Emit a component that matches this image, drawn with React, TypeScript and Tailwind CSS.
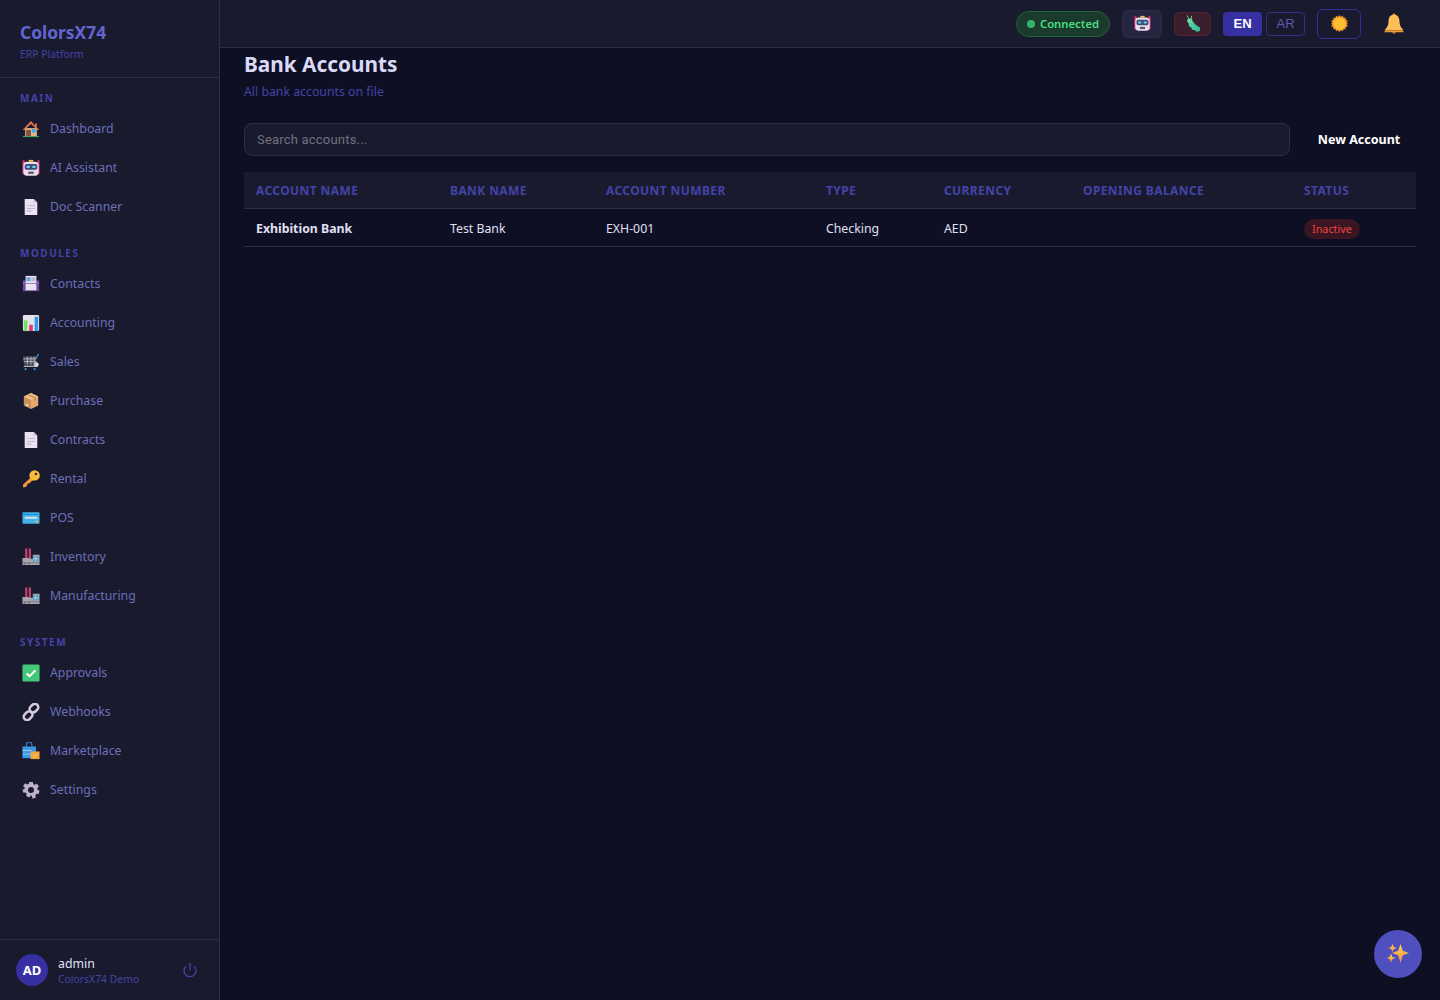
import type { ReactNode } from 'react';
import { Power } from 'lucide-react';

// small emoji-like drawings, all on a 20x20 box
const Ico = ({ children, size = 18 }: { children: ReactNode; size?: number }) => (
  <svg width={size} height={size} viewBox="0 0 20 20" className="shrink-0">
    {children}
  </svg>
);

const House = () => (
  <Ico>
    <path d="M3.500 9h13v9h-13z" fill="#e3b78c" />
    <path d="M10 1 1 10.500 2.500 11.500 10 4.500l7.500 7 1.500-1-2.500-2.500V4h-2v2z" fill="#e8704a" />
    <path d="M4.500 11h5.500v7H4.500z" fill="#7a5548" />
    <path d="M11 10h4v4h-4z" fill="#39a9e8" />
    <path d="M1 18h18v1H1z" fill="#3fbf6a" />
  </Ico>
);
const Robot = ({ size = 18 }: { size?: number }) => (
  <Ico size={size}>
    <path d="M7.500 1h5v2h-5z" fill="#f5c542" />
    <path d="M0.500 1.500h2.500V17H0.500zM17 1.500h2.500V17H17z" fill="#d9366e" />
    <rect x="1.500" y="3" width="17" height="15.500" rx="4" fill="#eadcec" />
    <rect x="3" y="5.500" width="14" height="6.500" rx="2" fill="#3e4a78" />
    <path d="M5 7.500h3.500v2.500H5zM11.500 7.500H15v2.500h-3.500z" fill="#6fd0f0" />
    <path d="M7 14h6v2.500H7z" fill="#58506e" />
  </Ico>
);
const Doc = () => (
  <Ico>
    <path d="M3 1h10l4 4v14H3z" fill="#e8e2f2" />
    <path d="M13 1l4 4h-4z" fill="#c4bcd4" />
    <path d="M5.500 8h9v1h-9zM5.500 11h9v1h-9zM5.500 14h5v1h-5z" fill="#b4aec2" />
  </Ico>
);
const CardIndex = () => (
  <Ico>
    <path d="M1 6h18v12H1z" fill="#6b4aa0" />
    <path d="M4 1h12v16H4z" fill="#e8e2f2" />
    <path d="M5 2.500h4.500V7H5z" fill="#6aa8e0" />
    <path d="M10.500 2.500H15V7h-4.500z" fill="#c0b8d0" />
    <path d="M1 8h3v2H1zM16 8h3v2h-3z" fill="#8b68c0" />
    <path d="M4 9h12v1H4z" fill="#8a7a9c" />
  </Ico>
);
const Chart = () => (
  <Ico>
    <rect x="1" y="1" width="18" height="18" rx="1.500" fill="#e6e2ec" />
    <path d="M2 7h4v12H2z" fill="#6ee06a" />
    <path d="M8 12h4v7H8z" fill="#e8346e" />
    <path d="M14 3h4v16h-4z" fill="#2f9be8" />
  </Ico>
);
const Cart = () => (
  <Ico>
    <path d="M1 4h15v9H2.500z" fill="#50505c" />
    <path d="M1.500 6.500h14.500M2 9.500h14M6 4v9M10 4v9M13.500 4v9" stroke="#b8b8c4" strokeWidth="1" />
    <path d="M2 14h14v1.500H2z" fill="#b8b8c4" />
    <path d="m15.500 6 3-5" stroke="#3f90d8" strokeWidth="1.300" fill="none" />
    <circle cx="16" cy="13" r="2.600" fill="#d8d8de" />
    <circle cx="4" cy="18" r="1.200" fill="#3f90d8" />
    <circle cx="14" cy="18" r="1.200" fill="#3f90d8" />
  </Ico>
);
const BoxIco = () => (
  <Ico>
    <path d="M10 1 2 5v10l8 4z" fill="#c98f56" />
    <path d="m10 1 8 4v10l-8 4z" fill="#e2aa72" />
    <path d="m10 9 8-4-8-4-8 4z" fill="#edc08e" />
    <path d="m5.500 3 8 4.200v3l2-1V6.100l-8-4z" fill="#b57f4c" opacity=".7" />
    <path d="M4 13h3v3H4z" fill="#eadccb" opacity=".7" />
  </Ico>
);
const Key = () => (
  <Ico>
    <path d="m10 8-9 8.500L1.500 19.500 4 19l2-2v-2h2l2-2 3-2z" fill="#f59a3c" />
    <circle cx="14" cy="6" r="5.800" fill="#f7bd3a" />
    <circle cx="15.500" cy="4.500" r="1.400" fill="#2a2238" />
  </Ico>
);
const CreditCard = () => (
  <Ico>
    <rect x="0.500" y="3.500" width="19" height="13" rx="1" fill="#3fb4ea" />
    <path d="M0.500 5.500h19v1H0.500z" fill="#1c84c8" />
    <path d="M3 8.500h14V11H3z" fill="#c8dce8" />
    <path d="M15 13h2.500v2H15z" fill="#f5c542" />
  </Ico>
);
const Factory = () => (
  <Ico>
    <path d="M3.500 0.500H6v12H3.500zM7.500 0.500H10v12H7.500z" fill="#c2406e" />
    <path d="M0.500 11h5.500l2 0V12h4V7.500h7.500V19H0.500z" fill="#a8a4ac" />
    <path d="M12.500 9h5.500v6h-5.500z" fill="#4a9ec8" />
    <path d="M14.700 9h1v6h-1zM12.500 11.500H18v1h-5.500z" fill="#a8d4ea" />
    <path d="M0.500 16h19v1H0.500z" fill="#77737c" />
    <path d="M2 17h2v1H2zM7 17h2v1H7z" fill="#5a5660" />
  </Ico>
);
const Check = () => (
  <Ico>
    <rect x="0.500" y="0.500" width="19" height="19" rx="1.500" fill="#42c878" />
    <path d="m5 10.500 3.500 3L15 7" stroke="#fff" strokeWidth="2.200" fill="none" />
  </Ico>
);
const Link = () => (
  <Ico>
    <g fill="none" stroke="#d4ccdc" strokeWidth="2.800">
      <rect x="8" y="2" width="10.500" height="7.500" rx="3.700" transform="rotate(-45 13.200 5.700)" />
      <rect x="1.500" y="10.500" width="10.500" height="7.500" rx="3.700" transform="rotate(-45 6.700 14.200)" />
    </g>
  </Ico>
);
const Bag = () => (
  <Ico>
    <path d="M5 5V3a3 3 0 0 1 6 0v2" fill="none" stroke="#3178c6" strokeWidth="1.400" />
    <path d="M0.500 5h15v13H0.500z" fill="#3b9ae8" />
    <path d="M0.500 9h10v1h-10zM0.500 13h10v1h-10z" fill="#9ccaf0" />
    <path d="M9.500 10.500H19.500V19H9.500z" fill="#f5a83c" />
    <path d="m13 16 3-2" stroke="#fbe0a8" strokeWidth="1" />
  </Ico>
);
const Gear = () => (
  <Ico>
    <path
      fillRule="evenodd"
      d="M8 1h4l.5 2.500 1.700.8 2.300-1.300 2.300 3-1.800 1.800.3 1.900 2.200 1.200-1 3.600-2.500-.2-1.200 1.500.6 2.500-3.500 1.400L10.500 16h-1l-1.400 2.200-3.500-1.400.6-2.500-1.200-1.500-2.500.2-1-3.600L2.700 9.200 3 7.300 1.200 5.500l2.300-3 2.300 1.300 1.700-.8zM10 6.700a3.300 3.300 0 1 0 0 6.600 3.300 3.300 0 0 0 0-6.600z"
      fill="#bdb2cc"
    />
  </Ico>
);
const Bug = () => (
  <Ico>
    <circle cx="15" cy="15.500" r="3" fill="#3fb89a" />
    <circle cx="11.500" cy="13.500" r="3.300" fill="#45c4a2" />
    <circle cx="8.500" cy="10.500" r="3.200" fill="#4ccca6" />
    <circle cx="6.500" cy="6.500" r="3" fill="#62d8a0" />
    <path d="M5 4 3.500 0.500M8 4l.5-3" stroke="#7ae080" strokeWidth="1" />
  </Ico>
);
const Sun = () => (
  <Ico size={17}>
    <path
      d="m10 0 1.700 2 2.300-1.200.8 2.500 2.600-.1-.1 2.600 2.500.8L18.600 9l1.400 1-1.400 1 1.200 2.400-2.500.8.100 2.600-2.600-.1-.8 2.500-2.300-1.200L10 20l-1.700-2-2.300 1.200-.8-2.500-2.600.1.100-2.600-2.500-.8L1.400 11 0 10l1.400-1L.2 6.600l2.500-.8L2.600 3.200l2.600.1.8-2.500 2.300 1.200z"
      fill="#f08a24"
    />
    <circle cx="10" cy="10" r="7.500" fill="#fbbf30" />
  </Ico>
);
const Bell = () => (
  <Ico size={22}>
    <circle cx="10" cy="2" r="1.500" fill="#f0a030" />
    <path d="M10 1.500c-4 0-5 3-5 6.500 0 4-2.500 6-3.500 8h17c-1-2-3.500-4-3.500-8 0-3.500-1-6.500-5-6.500z" fill="#fbbf55" />
    <path d="M1.500 16h17v1.500h-17z" fill="#f09a30" />
    <path d="M8 17.500h4l-2 1.500z" fill="#e88a28" />
  </Ico>
);
const Sparkles = () => (
  <svg width="22" height="22" viewBox="0 0 22 22">
    <defs>
      <linearGradient id="spark" x1="0" y1="0" x2="0" y2="1">
        <stop offset="0" stopColor="#fdd05a" />
        <stop offset="1" stopColor="#f8943c" />
      </linearGradient>
    </defs>
    <path d="M13.500 1 15.800 7.800 22 10l-6.200 2.200L13.500 20l-2.300-7.800L5 10l6.200-2.200z" fill="url(#spark)" />
    <path d="m5.500 1 1.200 2.800L9.500 5 6.700 6.200 5.500 9 4.300 6.200 1.500 5l2.800-1.200z" fill="url(#spark)" />
    <path d="m4 10.500 1.200 3.300 3.300 1.200-3.300 1.200L4 19.500l-1.200-3.300L0 15l2.800-1.200z" fill="url(#spark)" />
  </svg>
);

const nav: { title: string; items: [ReactNode, string][] }[] = [
  {
    title: 'MAIN',
    items: [
      [<House />, 'Dashboard'],
      [<Robot />, 'AI Assistant'],
      [<Doc />, 'Doc Scanner'],
    ],
  },
  {
    title: 'MODULES',
    items: [
      [<CardIndex />, 'Contacts'],
      [<Chart />, 'Accounting'],
      [<Cart />, 'Sales'],
      [<BoxIco />, 'Purchase'],
      [<Doc />, 'Contracts'],
      [<Key />, 'Rental'],
      [<CreditCard />, 'POS'],
      [<Factory />, 'Inventory'],
      [<Factory />, 'Manufacturing'],
    ],
  },
  {
    title: 'SYSTEM',
    items: [
      [<Check />, 'Approvals'],
      [<Link />, 'Webhooks'],
      [<Bag />, 'Marketplace'],
      [<Gear />, 'Settings'],
    ],
  },
];

const columns = [
  ['ACCOUNT NAME', 'w-[194px]'],
  ['BANK NAME', 'w-[156px]'],
  ['ACCOUNT NUMBER', 'w-[220px]'],
  ['TYPE', 'w-[118px]'],
  ['CURRENCY', 'w-[139px]'],
  ['OPENING BALANCE', 'w-[221px]'],
  ['STATUS', 'w-[124px]'],
];

export default function App() {
  return (
    <div className="flex h-screen overflow-hidden bg-[#0f0f23] font-['Noto_Sans',sans-serif]">
      <aside className="flex w-[220px] shrink-0 flex-col border-r border-[#2d2d4a] bg-[#1a1a2e]">
        <div className="h-[78px] border-b border-[#2d2d4a] px-5 pt-[20px]">
          <div className="text-[17.400px] leading-[25px] font-bold text-[#6366d1]">ColorsX74</div>
          <div className="mt-[2px] text-[10.400px] leading-[15px] text-[#4343a8]">ERP Platform</div>
        </div>
        <nav className="flex-1 pt-[13px]">
          {nav.map((section) => (
            <div key={section.title} className="mb-[20px]">
              <div className="px-5 pb-[4px] text-[10px] leading-[14px] font-bold tracking-[1.500px] text-[#4343a8]">
                {section.title}
              </div>
              {section.items.map(([icon, label]) => (
                <div key={label} className="flex h-[39px] items-center gap-[10px] pl-[22px] text-[12.300px] text-[#6a6fb8]">
                  {icon}
                  <span className="pt-[2px]">{label}</span>
                </div>
              ))}
            </div>
          ))}
        </nav>
        <div className="flex h-[61px] items-center gap-[10px] border-t border-[#2d2d4a] px-4">
          <div className="flex size-8 items-center justify-center rounded-full bg-[#3730a3] pt-[2px] text-[13px] font-bold text-white">
            AD
          </div>
          <div className="flex-1 pt-[2px]">
            <div className="text-[12.300px] leading-[16px] text-[#e0e0f5]">admin</div>
            <div className="text-[10.400px] leading-[15px] text-[#4343a8]">ColorsX74 Demo</div>
          </div>
          <Power size={16} className="mr-[5px] text-[#4343a8]" />
        </div>
      </aside>

      <div className="flex min-w-0 flex-1 flex-col">
        <header className="flex h-[48px] items-center justify-end border-b border-[#2d2d4a] bg-[#1a1a2e] pr-[35px]">
          <div className="flex h-[26px] w-[94px] items-center justify-center gap-[5px] rounded-full border border-[#22633f] bg-[#1a3a2e] text-[11.300px] font-semibold text-[#4ade80]">
            <span className="size-2 rounded-full bg-[#2fb56a]" />
            <span className="pt-[2px]">Connected</span>
          </div>
          <div className="ml-[12px] flex h-[28px] w-[40px] items-center justify-center rounded-md border border-[#2d2d4a] bg-[#25253f]">
            <Robot size={17} />
          </div>
          <div className="ml-[12px] flex h-[24px] w-[37px] items-center justify-center rounded-md border border-[#5c2030] bg-[#3a1e2c]">
            <Bug />
          </div>
          <div className="ml-[12px] flex h-[24px] w-[39px] items-center justify-center rounded bg-[#3730a3] font-['Liberation_Sans',sans-serif] text-[13px] font-semibold text-white">
            EN
          </div>
          <div className="ml-[4px] flex h-[24px] w-[39px] items-center justify-center rounded border border-[#312e81] font-['Liberation_Sans',sans-serif] text-[13px] text-[#5c5cb0]">
            AR
          </div>
          <div className="ml-[12px] flex h-[30px] w-[44px] items-center justify-center rounded-md border border-[#312e9a]">
            <Sun />
          </div>
          <div className="ml-[22px]">
            <Bell />
          </div>
        </header>

        <main className="flex-1 px-6">
          <h1 className="mt-[1px] text-[20.800px] leading-[30px] font-bold text-[#d9d9f7]">Bank Accounts</h1>
          <p className="mt-[4px] text-[12.300px] leading-[18px] text-[#4343a8]">All bank accounts on file</p>
          <div className="mt-[22px] flex items-center gap-3">
            <input
              placeholder="Search accounts..."
              className="h-[33px] flex-1 rounded-lg border border-[#2d2d4a] bg-[#1a1a2e] px-3 font-['Roboto',sans-serif] text-[13px] tracking-[0.2px] placeholder:text-[#71717f]"
            />
            <button type="button" className="w-[114px] pt-[2px] text-center text-[12.500px] font-bold text-white">
              New Account
            </button>
          </div>
          <table className="mt-[16px] w-full table-fixed border-collapse">
            <thead>
              <tr className="h-[36px] border-b border-[#2d2d4a] bg-[#1a1a2e]">
                {columns.map(([name, width]) => (
                  <th key={name} className={`${width} px-3 pt-[2px] text-left text-[12px] font-bold tracking-[0.4px] text-[#4343a8]`}>
                    {name}
                  </th>
                ))}
              </tr>
            </thead>
            <tbody>
              <tr className="h-[38px] border-b border-[#2d2d4a] text-[12.300px] text-[#e0e0f5]">
                <td className="px-3 pt-[4px] font-bold">Exhibition Bank</td>
                <td className="px-3 pt-[4px]">Test Bank</td>
                <td className="px-3 pt-[4px]">EXH-001</td>
                <td className="px-3 pt-[4px]">Checking</td>
                <td className="px-3 pt-[4px]">AED</td>
                <td className="px-3 pt-[4px]"></td>
                <td className="px-3 pt-[3px]">
                  <span className="inline-block rounded-full bg-[#3a1522] px-[8px] py-[1px] text-[10.800px] leading-[18px] text-[#ef4444]">
                    Inactive
                  </span>
                </td>
              </tr>
            </tbody>
          </table>
        </main>
      </div>

      <button
        type="button"
        className="fixed right-[18px] bottom-[22px] flex size-12 items-center justify-center rounded-full bg-[#4f4fc0]"
      >
        <Sparkles />
      </button>
    </div>
  );
}
